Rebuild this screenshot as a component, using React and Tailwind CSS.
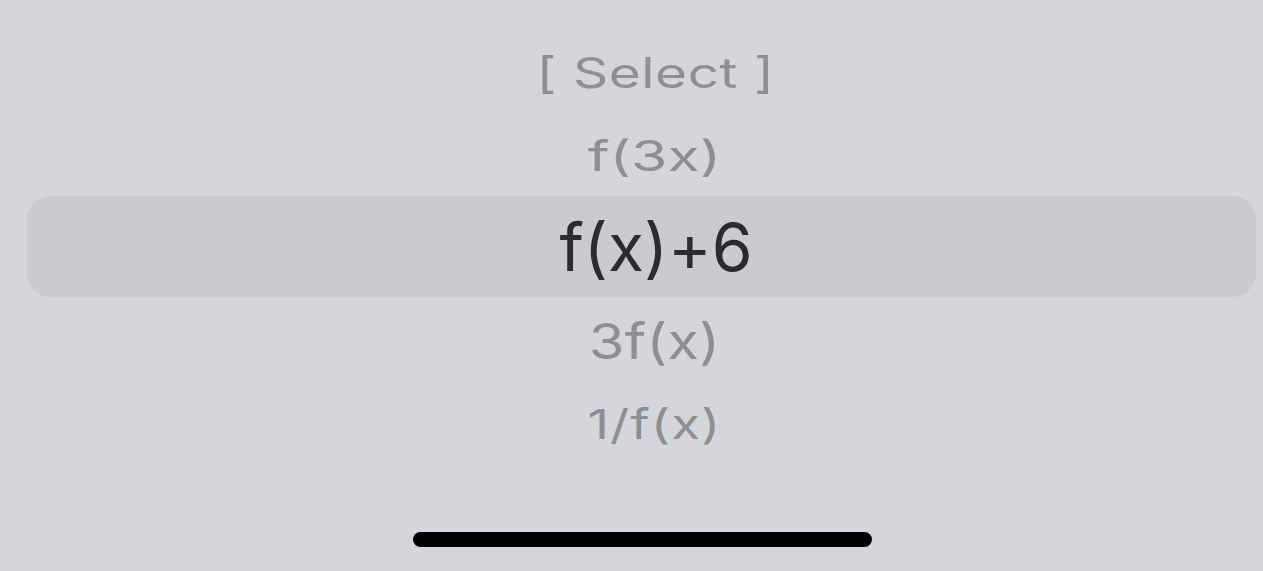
export default function App() {
  const font = { fontFamily: "Inter, 'Noto Sans', sans-serif" };

  return (
    <div className="w-[1263px] h-[571px] bg-[#d5d6db] flex flex-col overflow-hidden" style={font}>
      {/* picker wheel */}
      <div className="pt-[30px] flex flex-col">
        <div className="h-[84px] flex items-center justify-center pl-[48px]">
          <span className="text-[55px] leading-none text-[#8e8e93] scale-y-[0.77] tracking-[0.5px]">[ Select ]</span>
        </div>
        <div className="h-[82px] flex items-center justify-center pl-[46px]">
          <span className="text-[59px] leading-none text-[#8e8e93] scale-y-[0.72]">f(3x)</span>
        </div>
        <div className="h-[101px] mx-[27px] w-[1229px] rounded-[24px] bg-[#cacbd0] flex items-center justify-center pl-[29px]">
          <span className="text-[66px] leading-none text-[#2c2c2e]">f(x)+6</span>
        </div>
        <div className="h-[88px] flex items-center justify-center pl-[46px]">
          <span className="text-[58px] leading-none text-[#8e8e93] scale-y-[0.85]">3f(x)</span>
        </div>
        <div className="h-[78px] flex items-center justify-center pl-[46px]">
          <span className="text-[53px] leading-none text-[#8e8e93] scale-y-[0.78] tracking-[1px]">1/f(x)</span>
        </div>
      </div>

      {/* home indicator */}
      <div className="mt-[69px] flex pl-[413px]">
        <div className="w-[459px] h-[15px] rounded-full bg-black" />
      </div>
    </div>
  );
}
